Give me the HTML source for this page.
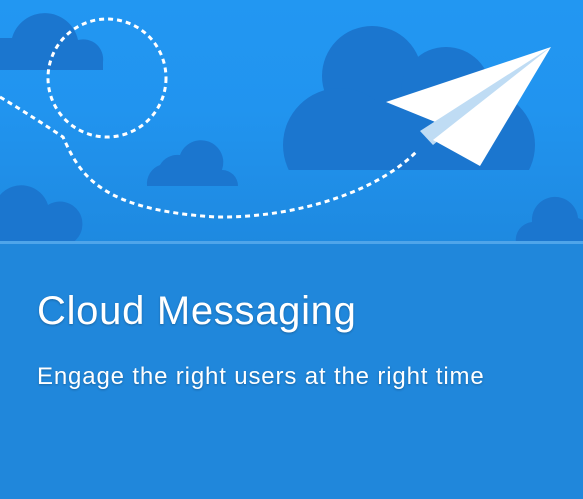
<!DOCTYPE html>
<html><head><meta charset="utf-8"><style>
html,body{margin:0;padding:0}
body{width:583px;height:499px;overflow:hidden;background:#2087db;position:relative;font-family:"Liberation Sans",sans-serif}
svg{position:absolute;left:0;top:0}
.t{position:absolute;left:37px;color:#fff;white-space:nowrap;text-shadow:0 1px 2px rgba(0,0,0,.25)}
</style></head><body>
<svg width="583" height="244" viewBox="0 0 583 244">
<defs><linearGradient id="bg" x1="0" y1="0" x2="0" y2="1"><stop offset="0" stop-color="#2297f2"/><stop offset="0.45" stop-color="#2194ef"/><stop offset="1" stop-color="#1e89e0"/></linearGradient>
<clipPath id="c1"><rect x="0" y="0" width="583" height="170"/></clipPath></defs>
<rect width="583" height="244" fill="url(#bg)"/>
<g fill="#1b76cf">
<path d="M0 70 V38 H12 A34 34 0 0 1 78 40 A20 20 0 0 1 103 62 V70 Z"/>
<g clip-path="url(#c1)">
<circle cx="372" cy="76" r="50"/>
<circle cx="446" cy="92" r="45"/>
<circle cx="340" cy="145" r="57"/>
<circle cx="480" cy="145" r="55"/>
<rect x="340" y="100" width="140" height="70"/>
</g>
<path d="M147 186 A20 20 0 0 1 160 165 A20 20 0 0 1 180 155 A22 22 0 0 1 222 170 A16 16 0 0 1 238 186 Z"/>
<path d="M0 243 V195 A28 28 0 0 1 48 205 A22 22 0 0 1 72 243 Z"/>
<path d="M516 243 A18 18 0 0 1 532 222 A22 22 0 0 1 578 218 L583 220 V243 Z"/>
</g>
<g fill="none" stroke="#fff" stroke-width="3" stroke-dasharray="5 4">
<circle cx="107" cy="78" r="59"/>
<path d="M0 97 C25 112 45 125 63 137 C80 175 100 210 216 217 C300 218 380 190 418 150"/>
</g>
<polygon points="386,102 551,47 455,130" fill="#fff"/>
<polygon points="420,131 551,47 433,145" fill="#bfdcf4"/>
<polygon points="433,140 551,47 480,166" fill="#fff"/>
<rect y="241" width="583" height="3" fill="#4fa5ea"/>
</svg>
<div class="t" style="top:289px;font-size:40px;letter-spacing:0.7px">Cloud Messaging</div>
<div class="t" style="top:363px;font-size:24px;letter-spacing:0.85px">Engage the right users at the right time</div>
</body></html>
